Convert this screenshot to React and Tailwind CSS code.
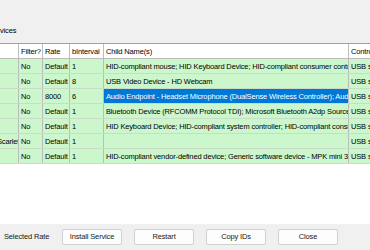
const rows = [
  { first: '', filter: 'No', rate: 'Default', interval: '1', child: 'HID-compliant mouse; HID Keyboard Device; HID-compliant consumer control device', ctrl: 'USB standard' },
  { first: '', filter: 'No', rate: 'Default', interval: '8', child: 'USB Video Device - HD Webcam', ctrl: 'USB standard' },
  { first: '', filter: 'No', rate: '8000', interval: '6', child: 'Audio Endpoint - Headset Microphone (DualSense Wireless Controller); Audio Endpoint', ctrl: 'USB standard', selected: true },
  { first: '', filter: 'No', rate: 'Default', interval: '1', child: 'Bluetooth Device (RFCOMM Protocol TDI); Microsoft Bluetooth A2dp Source', ctrl: 'USB standard' },
  { first: '', filter: 'No', rate: 'Default', interval: '1', child: 'HID Keyboard Device; HID-compliant system controller; HID-compliant consumer control', ctrl: 'USB standard' },
  { first: 'Scarlett', filter: 'No', rate: 'Default', interval: '1', child: '', ctrl: 'USB standard' },
  { first: '', filter: 'No', rate: 'Default', interval: '1', child: 'HID-compliant vendor-defined device; Generic software device - MPK mini 3', ctrl: 'USB standard' },
];

function Cell({ w, children, className = '' }) {
  return (
    <div className={`${w} shrink-0 h-full border-r border-[#bcbcbc] overflow-hidden whitespace-nowrap pl-[2px] pt-[1px] flex items-center ${className}`}>
      {children}
    </div>
  );
}

function Button({ children }) {
  return (
    <button className="w-[60px] h-[16px] bg-[#fdfdfd] border border-[#d0d0d0] rounded-[2px] text-[#1a1a1a] flex items-center justify-center">
      {children}
    </button>
  );
}

export default function App() {
  return (
    <div className="w-[370px] h-[250px] overflow-hidden bg-[#f0f0f0] flex flex-col text-black text-[7.5px] tracking-[-0.15px]" style={{ fontFamily: '"Liberation Sans", Arial, sans-serif' }}>
      <div className="h-[43px] shrink-0 flex items-end pb-[7px]">
        <span>vices</span>
      </div>
      <div className="h-[181px] shrink-0 bg-white border-t border-[#a0a0a0] overflow-hidden">
        <div className="h-[15px] flex border-b border-[#bcbcbc] bg-white">
          <Cell w="w-[19px]" />
          <Cell w="w-[24px]">Filter?</Cell>
          <Cell w="w-[27px]">Rate</Cell>
          <Cell w="w-[34px]">bInterval</Cell>
          <Cell w="w-[245px]">Child Name(s)</Cell>
          <Cell w="w-[60px]" className="border-r-0">Controller</Cell>
        </div>
        {rows.map((r, i) => (
          <div key={i} className="h-[15px] flex border-b border-[#c8dcc8] bg-[#ccf7cc]">
            <Cell w="w-[19px]">
              {r.first && <span className="-ml-[5px]">{r.first}</span>}
            </Cell>
            <Cell w="w-[24px]">{r.filter}</Cell>
            <Cell w="w-[27px]">{r.rate}</Cell>
            <Cell w="w-[34px]">{r.interval}</Cell>
            <Cell w="w-[245px]" className={r.selected ? 'bg-[#0078d7] text-white' : ''}>{r.child}</Cell>
            <Cell w="w-[60px]" className="border-r-0">{r.ctrl}</Cell>
          </div>
        ))}
      </div>
      <div className="flex-1 flex items-center pl-[4px]">
        <span className="w-[58px] text-[#1a1a1a]">Selected Rate</span>
        <div className="flex gap-[12px]">
          <Button>Install Service</Button>
          <Button>Restart</Button>
          <Button>Copy IDs</Button>
          <Button>Close</Button>
        </div>
      </div>
    </div>
  );
}
